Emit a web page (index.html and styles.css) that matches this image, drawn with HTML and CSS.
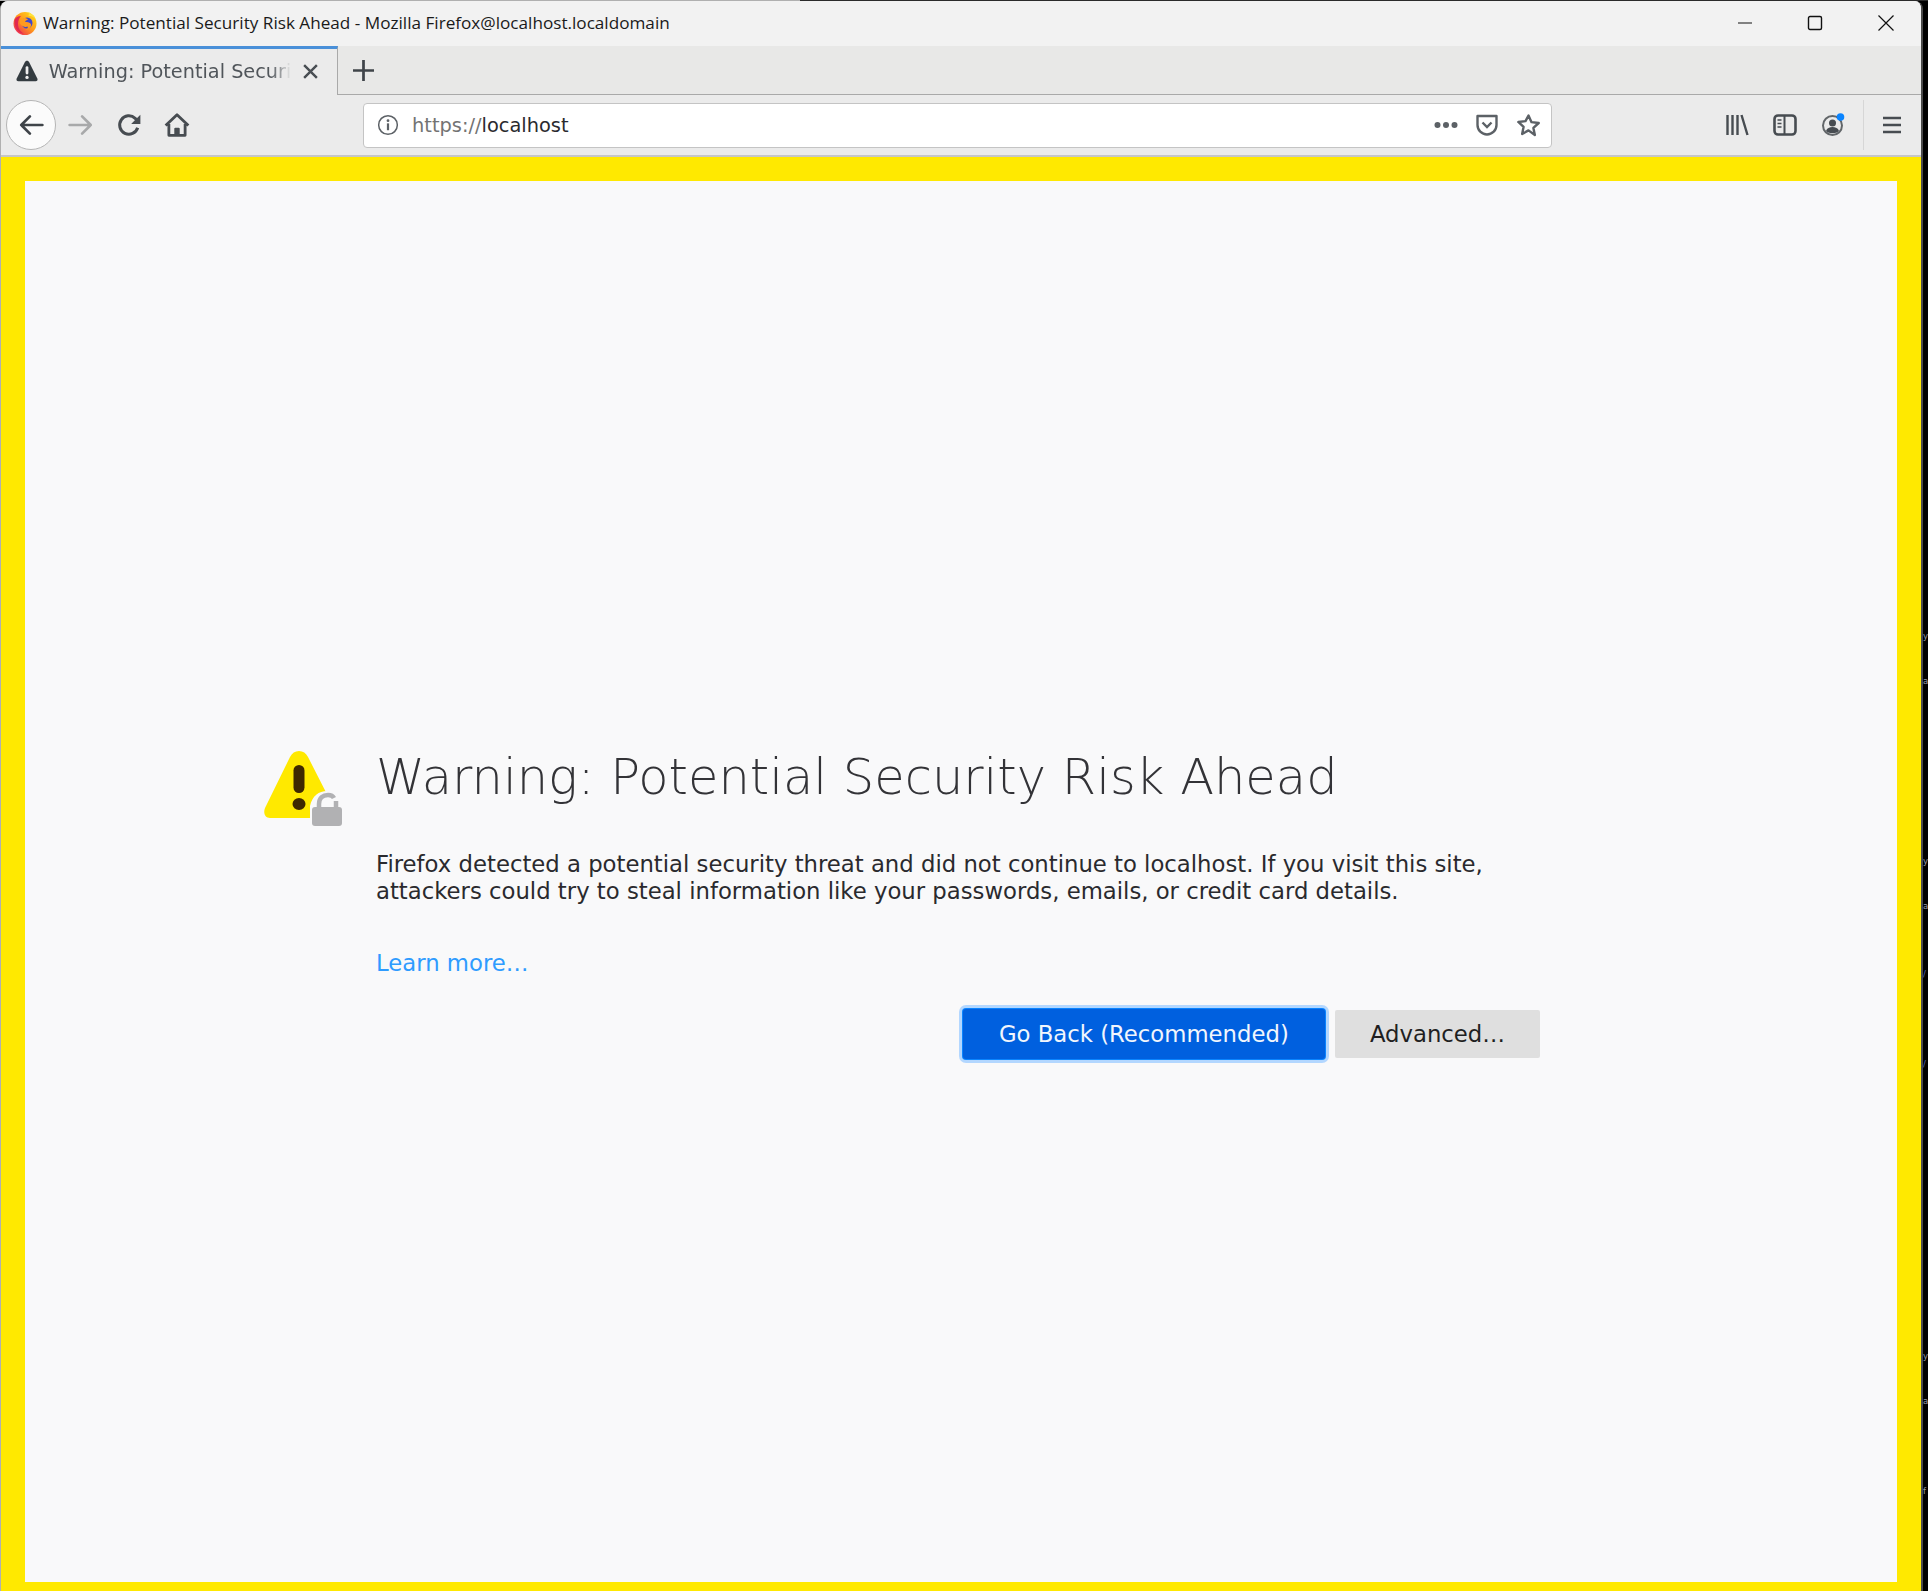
FILE: index.html
```html
<!DOCTYPE html>
<html lang="en">
<head>
  <meta charset="UTF-8" />
  <title>Warning: Potential Security Risk Ahead</title>
  <link rel="stylesheet" href="styles.css">
</head>
<body>
  <!-- bits of the desktop showing past the window edge -->
  <pre class="desktop-text">y

a







y

a


<span class="blue">/</span>



<span class="blue">/</span>












y

a



f</pre>

  <div class="window">

    <!-- title bar -->
    <div class="titlebar">
      <svg class="fx-logo" viewBox="0 0 24 24" width="24" height="24">
        <defs>
          <linearGradient id="fxOuter" x1="0.85" y1="0.1" x2="0.15" y2="0.85">
            <stop offset="0" stop-color="#ffd21a"/>
            <stop offset="0.5" stop-color="#ff9a1c"/>
            <stop offset="1" stop-color="#f0384e"/>
          </linearGradient>
        </defs>
        <circle cx="12" cy="12.500" r="11.500" fill="url(#fxOuter)"/>
        <path d="M1.500 9C1 15 4 22 11 23c-3-2-6-5-6-10 0-3 1-6 3-8C5 5 2.500 6.500 1.500 9z" fill="#e0284f"/>
        <circle cx="14" cy="12" r="5.500" fill="#3f48cc"/>
        <path d="M7 8.500c3-2 6-2 8 0-1 1-3 1-3 2 1 1 5 0 6 3 .5 3-3 6-7 5.500 3 0 4.500-2 3.500-3.500-2 1-6 0-7.500-3z" fill="#ff9a1f"/>
        <path d="M15 1c3 1 6 3 7.500 7-2-2.500-4.500-3-7-3 .5-1.500.5-3-.5-4z" fill="#ffe23a"/>
      </svg>
      <span class="win-title">Warning: Potential Security Risk Ahead - Mozilla Firefox@localhost.localdomain</span>
      <div class="win-controls">
        <svg viewBox="0 0 16 16" width="16" height="16"><path d="M2 8h14" stroke="#111" stroke-width="1.200" fill="none"/></svg>
        <svg viewBox="0 0 16 16" width="16" height="16"><rect x="1.500" y="1.500" width="13" height="13" rx="1.500" stroke="#111" stroke-width="1.400" fill="none"/></svg>
        <svg viewBox="0 0 16 16" width="16" height="16"><path d="M.5.5l15 15M15.500.5l-15 15" stroke="#111" stroke-width="1.200" fill="none"/></svg>
      </div>
    </div>

    <!-- tabs -->
    <div class="tabbar">
      <div class="tab">
        <svg viewBox="0 0 16 16" width="22" height="22"><path d="M8 .5c.7 0 1.200.4 1.500 1l6 12c.5 1-.1 2-1.200 2H1.700c-1.100 0-1.700-1-1.200-2l6-12c.3-.6.8-1 1.500-1z" fill="#333b40"/><rect x="7" y="4.500" width="2" height="6" rx="1" fill="#eee"/><circle cx="8" cy="12.700" r="1.200" fill="#eee"/></svg>
        <span class="tab-label">Warning: Potential Securi</span>
        <svg class="tab-close" viewBox="0 0 16 16" width="17" height="17"><path d="M2 2l12 12M14 2L2 14" stroke="#4a4f54" stroke-width="2.300" fill="none"/></svg>
      </div>
      <svg class="new-tab" viewBox="0 0 20 20" width="21" height="21"><path d="M10 0v20M0 10h20" stroke="#3f4449" stroke-width="2.600" fill="none"/></svg>
    </div>

    <!-- toolbar -->
    <div class="toolbar">
      <button class="back-btn">
        <svg viewBox="0 0 24 24" width="26" height="26"><path d="M22.500 12H3M11 4l-8 8 8 8" stroke="#3f4449" stroke-width="2.500" fill="none" stroke-linejoin="round" stroke-linecap="round"/></svg>
      </button>
      <svg class="tb-icon" viewBox="0 0 24 24" width="26" height="26"><path d="M1.500 12H21M13 4l8 8-8 8" stroke="#a8a9aa" stroke-width="2.500" fill="none" stroke-linejoin="round" stroke-linecap="round"/></svg>
      <svg class="tb-icon reload" viewBox="0 0 24 24" width="26" height="26"><path d="M20 14.500a8.500 8.500 0 1 1-2.300-8.700L21 9" stroke="#474c51" stroke-width="2.800" fill="none"/><path d="M22.500 2.500V11H14z" fill="#474c51"/></svg>
      <svg class="tb-icon home" viewBox="0 0 24 24" width="26" height="26"><path d="M1.500 12.500L12 2.500l10.500 10M4.500 11v10.500h15V11" stroke="#474c51" stroke-width="2.600" fill="none" stroke-linejoin="round"/><rect x="9.500" y="14.500" width="5" height="7" rx="1" fill="#474c51"/></svg>

      <div class="urlbar">
        <svg viewBox="0 0 16 16" width="22" height="22"><circle cx="8" cy="8" r="6.800" stroke="#5c6166" stroke-width="1.100" fill="none"/><circle cx="8" cy="4.900" r="1" fill="#5c6166"/><rect x="7.200" y="6.800" width="1.600" height="5" fill="#5c6166"/></svg>
        <span class="url"><span class="url-scheme">https://</span>localhost</span>
        <div class="url-actions">
          <svg viewBox="0 0 24 8" width="24" height="8"><circle cx="3.500" cy="4" r="3" fill="#5c6166"/><circle cx="12" cy="4" r="3" fill="#5c6166"/><circle cx="20.500" cy="4" r="3" fill="#5c6166"/></svg>
          <svg viewBox="0 0 24 24" width="24" height="24"><path d="M2.500 3h19v9a9.500 9.500 0 0 1-19 0z" stroke="#5c6166" stroke-width="2.400" fill="none" stroke-linejoin="round"/><path d="M7.500 9.500l4.500 4.500 4.500-4.500" stroke="#5c6166" stroke-width="2.400" fill="none"/></svg>
          <svg viewBox="0 0 24 24" width="25" height="25"><path d="M12 2.500l2.900 6.300 6.900.8-5.100 4.700 1.400 6.800L12 16.700 5.900 20.100l1.400-6.800-5.100-4.700 6.900-.8z" stroke="#5c6166" stroke-width="2.300" fill="none" stroke-linejoin="round"/></svg>
        </div>
      </div>

      <div class="tb-right">
        <svg viewBox="0 0 24 24" width="24" height="24"><path d="M2.500 2v20M7.500 2v20M12.500 2v20M16.500 2l6 20" stroke="#474c51" stroke-width="2.400" fill="none"/></svg>
        <svg viewBox="0 0 24 24" width="24" height="24"><rect x="1.500" y="2.500" width="21" height="19" rx="3.500" stroke="#474c51" stroke-width="2.600" fill="none"/><path d="M11.500 2.500v19" stroke="#474c51" stroke-width="2"/><path d="M4.500 7h4M4.500 10.500h4M4.500 14h4" stroke="#474c51" stroke-width="1.500"/></svg>
        <svg viewBox="0 0 24 24" width="24" height="24"><circle cx="11.500" cy="12.500" r="9.500" stroke="#626669" stroke-width="2" fill="none"/><circle cx="11.500" cy="10" r="3.500" fill="#474c51"/><path d="M5 18c1-3 3.500-4 6.500-4s5.500 1 6.500 4c-3 3-10 3-13 0z" fill="#474c51"/><circle cx="19.500" cy="4" r="3.800" fill="#0a84ff"/></svg>
        <div class="tb-sep"></div>
        <svg viewBox="0 0 20 18" width="20" height="18"><path d="M1 2h18M1 9h18M1 16h18" stroke="#474c51" stroke-width="2.600" fill="none"/></svg>
      </div>
    </div>

    <!-- page -->
    <div class="page-frame">
      <div class="page">
        <div class="cert-error">
          <svg class="warn-icon" viewBox="0 0 78 77" width="78" height="77">
            <path d="M35 1c4 0 7 2 9 6l26 51c3 6 0 10-5 10H6c-5 0-7-5-5-10L26 7c2-4 5-6 9-6z" fill="#ffe900"/>
            <rect x="29.500" y="15" width="11" height="28" rx="5.500" fill="#3e2800"/>
            <ellipse cx="35" cy="54" rx="6.500" ry="6" fill="#3e2800"/>
            <path d="M46 77V56c2-10 9-15 17-15s15 5 15 15v21z" fill="#f9f9fa"/>
            <rect x="48" y="57" width="30" height="19" rx="3" fill="#b1b1b3"/>
            <path d="M55 58v-4c0-6 4-9 9-9 3 0 5 1 6 3" stroke="#b1b1b3" stroke-width="4.500" fill="none"/>
            <path d="M72 51v7" stroke="#b1b1b3" stroke-width="4.500"/>
          </svg>
          <div class="content">
            <h1 class="title">Warning: Potential Security Risk Ahead</h1>
            <p class="desc">Firefox detected a potential security threat and did not continue to localhost. If you visit this site, attackers could try to steal information like your passwords, emails, or credit card details.</p>
            <a class="learn" href="#">Learn more…</a>
            <div class="actions">
              <button class="btn primary">Go Back (Recommended)</button>
              <button class="btn">Advanced…</button>
            </div>
          </div>
        </div>
      </div>
    </div>
  </div>
</body>
</html>
```
FILE: styles.css
```css
html, body {
  margin: 0;
  height: 100%;
}

body {
  position: relative;
  overflow: hidden;
  background: linear-gradient(to right, #b0b0b0 800px, #2b2b2b 800px) top / 100% 1px no-repeat, #000;
  font-family: "DejaVu Sans", sans-serif;
}

.desktop-text {
  position: absolute;
  top: 625px;
  left: 1923px;
  margin: 0;
  font-family: "DejaVu Sans", sans-serif;
  font-size: 8.500px;
  line-height: 22.500px;
  color: #9a9aa8;
}

.desktop-text .blue {
  color: #5a6ab8;
}

.window {
  position: relative;
  width: 1923px;
  height: 1590px;
  margin-top: 1px;
  box-sizing: border-box;
  display: flex;
  flex-direction: column;
  background: #f2f2f2;
  border-left: 1px solid #b0b0b0;
  border-right: 2px solid #4a4a4a;
  border-top-right-radius: 8px;
  border-top-left-radius: 8px;
  overflow: hidden;
}

.titlebar {
  height: 45px;
  flex: none;
  display: flex;
  align-items: center;
  padding: 0 0 2px 12px;
  box-sizing: border-box;
  background: #f2f2f2;
}

.fx-logo {
  margin-right: 6px;
}

.win-title {
  font-family: "Open Sans", sans-serif;
  font-size: 17.150px;
  color: #1a1a1a;
}

.win-controls {
  margin-left: auto;
  display: flex;
  gap: 55px;
  padding-right: 27px;
}

.tabbar {
  height: 48px;
  flex: none;
  display: flex;
  align-items: stretch;
  background: #e8e8e7;
  border-bottom: 1px solid #a9a9a9;
}

.tab {
  width: 337px;
  box-sizing: border-box;
  margin-bottom: -1px;
  display: flex;
  align-items: center;
  justify-content: space-between;
  padding: 0 18px 2px 15px;
  background: #ebebeb;
  border-top: 3px solid #4a90d9;
  border-right: 1px solid #a9a9a9;
}

.tab-label {
  white-space: nowrap;
  font-size: 19.300px;
  color: #50555a;
  -webkit-mask-image: linear-gradient(to left, transparent, #000 20px);
  mask-image: linear-gradient(to left, transparent, #000 20px);
}

.new-tab {
  margin: 14px 0 0 15px;
}

.toolbar {
  height: 62px;
  flex: none;
  display: flex;
  align-items: center;
  box-sizing: border-box;
  padding-left: 5px;
  background: #ebebeb;
  border-bottom: 2px solid #c6c6c6;
}

.back-btn {
  width: 50px;
  height: 50px;
  padding: 0;
  display: flex;
  align-items: center;
  justify-content: center;
  background: #fbfbfb;
  border: 1px solid #b5b5b5;
  border-radius: 50%;
}

.tb-icon {
  margin-left: 12px;
}

.tb-icon.reload {
  margin-left: 22px;
}

.tb-icon.home {
  margin-left: 22px;
}

.urlbar {
  width: 1189px;
  height: 45px;
  margin-left: 173px;
  box-sizing: border-box;
  display: flex;
  align-items: center;
  padding: 0 10px 0 13px;
  background: #fff;
  border: 1px solid #c4c4c4;
  border-radius: 4px;
}

.url {
  margin-left: 13px;
  font-size: 19.400px;
  color: #2a2a2e;
}

.url-scheme {
  color: #737373;
}

.url-actions {
  margin-left: auto;
  display: flex;
  align-items: center;
  gap: 17px;
}

.tb-right {
  margin-left: auto;
  display: flex;
  align-items: center;
  gap: 24px;
  padding-right: 19px;
}

.tb-sep {
  width: 1px;
  height: 50px;
  margin: 0 -6px 0 -6px;
  background: #d6d6d6;
}

.page-frame {
  flex: 1;
  display: flex;
  padding: 24px 24px 9px 24px;
  background: #ffe900;
}

.page {
  flex: 1;
  display: flex;
  background: #f9f9fa;
}

.cert-error {
  margin: 566px 0 0 239px;
  display: flex;
  align-items: flex-start;
  color: #2a2a2e;
}

.warn-icon {
  margin: 3px 34px 0 0;
  flex: none;
}

.content {
  width: 1164px;
  display: flex;
  flex-direction: column;
  align-items: flex-start;
}

.title {
  margin: 0;
  font-size: 49.500px;
  font-weight: 200;
  line-height: 60px;
  font-family: "DejaVu Sans", sans-serif;
  color: #333337;
}

.desc {
  margin: 44px 0 0;
  font-size: 22.750px;
  line-height: 27px;
}

.learn {
  margin-top: 45px;
  font-size: 22.750px;
  color: #2e9bff;
  text-decoration: none;
}

.actions {
  align-self: flex-end;
  display: flex;
  align-items: center;
  gap: 10px;
  margin-top: 33px;
}

.btn {
  height: 48px;
  padding: 0 35px;
  border: 0;
  border-radius: 2px;
  background: #dfdfdf;
  font-family: "DejaVu Sans", sans-serif;
  font-size: 22.750px;
  color: #1f1f22;
}

.btn.primary {
  width: 362px;
  height: 50px;
  border-radius: 3px;
  color: #f1f6fd;
  background: #0060df;
  box-shadow: 0 0 0 1px #0a84ff, 0 0 0 4px #b3d7ff;
}
```
